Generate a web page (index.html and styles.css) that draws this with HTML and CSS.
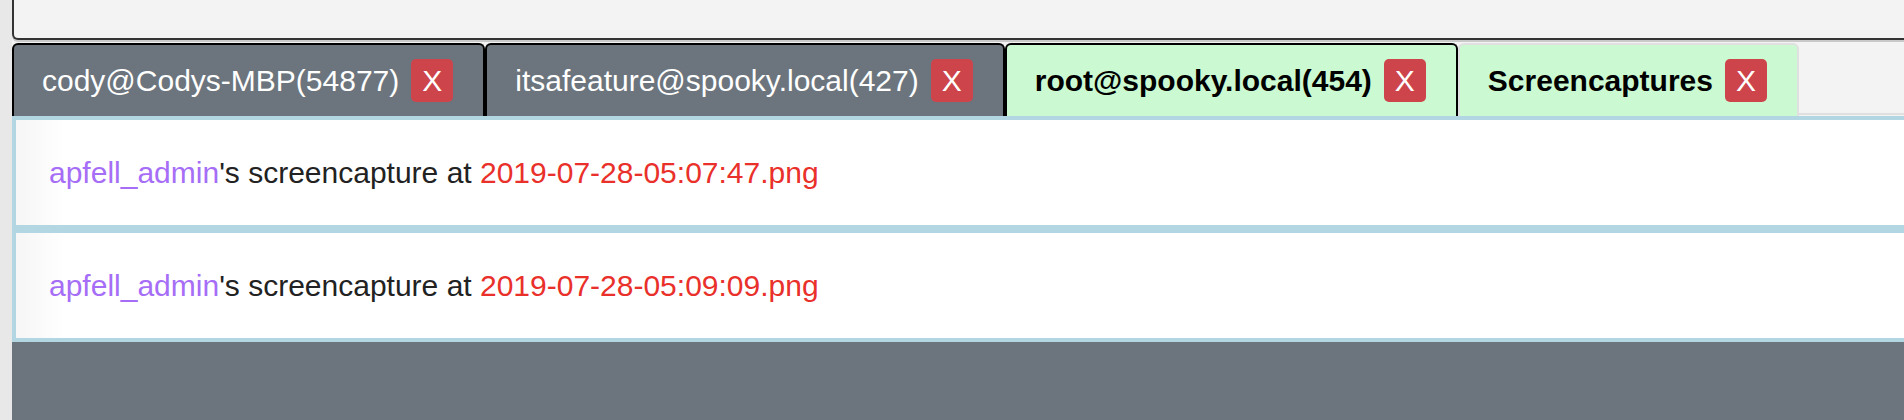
FILE: index.html
```html
<!DOCTYPE html>
<html>
<head>
<meta charset="utf-8">
<link rel="stylesheet" href="styles.css">
</head>
<body>
<div class="page">
  <div class="side"></div>
  <div class="main">
    <div class="topbox"></div>
    <div class="tabbar">
      <div class="tab tab-dark"><span class="tab-label">cody@Codys-MBP(54877)</span><span class="close">X</span></div>
      <div class="tab tab-dark"><span class="tab-label">itsafeature@spooky.local(427)</span><span class="close">X</span></div>
      <div class="tab tab-green tab-outlined"><span class="tab-label">root@spooky.local(454)</span><span class="close">X</span></div>
      <div class="tab tab-green tab-active"><span class="tab-label">Screencaptures</span><span class="close">X</span></div>
      <div class="tab-fill"></div>
    </div>
    <div class="rows">
      <div class="row"><span class="user">apfell_admin</span>'s screencapture at <span class="file">2019-07-28-05:07:47.png</span></div>
      <div class="row"><span class="user">apfell_admin</span>'s screencapture at <span class="file">2019-07-28-05:09:09.png</span></div>
    </div>
    <div class="footer"></div>
  </div>
</div>
</body>
</html>
```
FILE: styles.css
```css
* { box-sizing: border-box; }
html, body { margin: 0; padding: 0; }
body {
  width: 1904px;
  height: 420px;
  overflow: hidden;
  font-family: "Liberation Sans", Arial, sans-serif;
  background: #f3f3f3;
}
.page {
  display: flex;
  height: 420px;
}
.side {
  width: 12px;
  flex: none;
  background: #e8e8e8;
}
.main {
  flex: 1;
  display: flex;
  flex-direction: column;
  min-width: 0;
  background: #f3f3f3;
}
.topbox {
  height: 40px;
  flex: none;
  background: #f3f3f3;
  border-left: 2px solid #333;
  border-bottom: 2px solid #333;
  border-bottom-left-radius: 6px;
  box-shadow: 0 2px 0 #c9c9c9;
}
.tabbar {
  display: flex;
  align-items: stretch;
  height: 76px;
  padding-top: 3px;
  flex: none;
}
.tab {
  display: flex;
  align-items: center;
  gap: 12px;
  padding: 0 30px 0 28px;
  border: 2px solid #000;
  border-bottom: 0;
  border-radius: 6px 6px 0 0;
  font-size: 30px;
  white-space: nowrap;
}
.tab-dark {
  background: #6c757d;
  color: #fff;
}
.tab-green {
  background: #cbf9d2;
  color: #000;
  font-weight: bold;
}
.tab-active {
  border-color: #e0e0e0;
}
.close {
  display: inline-block;
  height: 43px;
  line-height: 43px;
  padding: 0 11px;
  background: #cd444b;
  color: #fff;
  border-radius: 5px;
  font-weight: normal;
  font-size: 30px;
}
.tab-fill {
  flex: 1;
  border-bottom: 2px solid #e0e0e0;
  margin-bottom: 1px;
}
.rows {
  flex: none;
  display: flex;
  flex-direction: column;
}
.row {
  height: 113px;
  display: flex;
  align-items: center;
  padding-left: 33px;
  border: 4px solid #b3d7e2;
  border-right: 0;
  background: linear-gradient(to right, #f6f6f6, #ffffff 50px);
  font-size: 30px;
  color: #222;
  white-space: pre;
}
.user { color: #a66df6; }
.file { color: #e9302a; }
.footer {
  flex: 1;
  background: #6c757d;
}
```
